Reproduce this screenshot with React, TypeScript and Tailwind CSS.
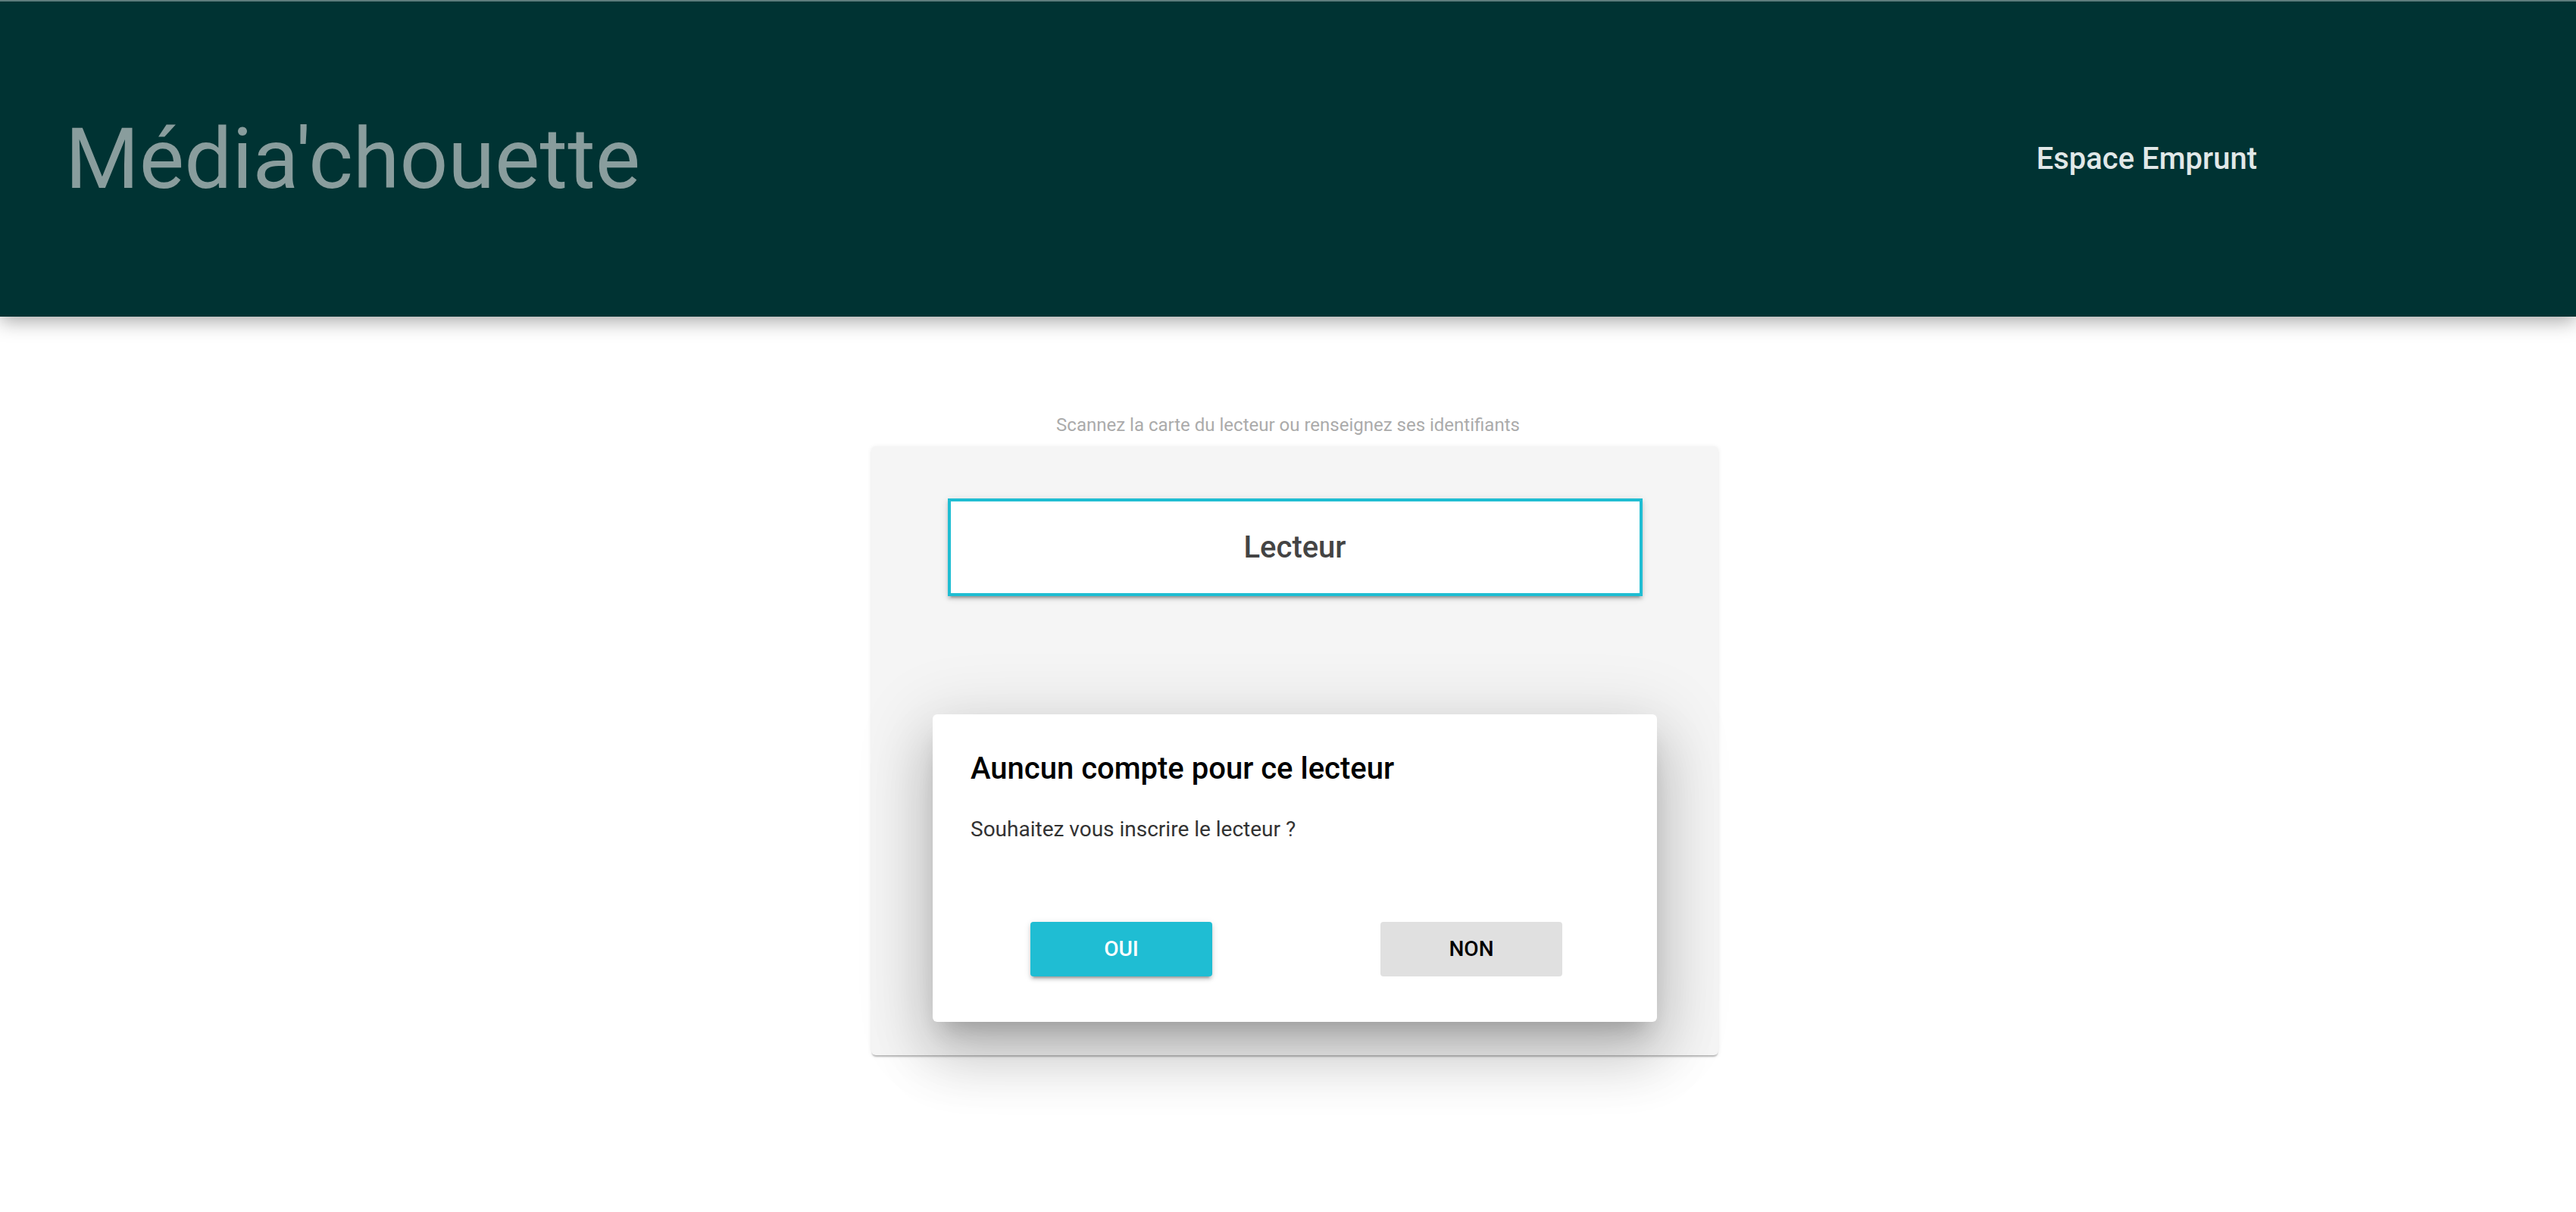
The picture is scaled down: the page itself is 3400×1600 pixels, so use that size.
export default function App() {
	return (
		<div className="min-h-screen bg-white font-['Roboto','Liberation_Sans',sans-serif]">
			<header className="relative z-10 flex h-[418px] items-center justify-between border-t-2 border-[#5d7c7c] bg-[#003333] pl-[86px] pr-[421px] shadow-[0_6px_24px_rgba(0,0,0,0.35)]">
				<h1 className="text-[112px] font-normal leading-none text-[#899d9d]">
					Média'chouette
				</h1>
				<span className="text-[40px] font-medium leading-none text-[#e1e8e8]">
					Espace Emprunt
				</span>
			</header>

			<main className="flex flex-col items-center pt-[127px]">
				<p className="text-[24px] leading-[32px] text-[#ababab]">
					Scannez la carte du lecteur ou renseignez ses identifiants
				</p>

				<div className="ml-[18px] mt-[12px] flex w-[1118px] flex-col items-center rounded-[6px] bg-[#f5f5f5] pb-[44px] pt-[69px] shadow-[0_3px_2px_-1px_rgba(0,0,0,0.25),0_1px_6px_rgba(0,0,0,0.08)]">
					<div className="flex h-[129px] w-[917px] items-center justify-center border-4 border-[#1fbdd2] bg-white text-[40px] font-medium text-[#444444] shadow-[0_6px_2px_-4px_rgba(0,0,0,0.2),0_4px_4px_0_rgba(0,0,0,0.14),0_2px_10px_0_rgba(0,0,0,0.12)]">
						Lecteur
					</div>

					<div className="mt-[156px] w-[956px] rounded-[6px] bg-white px-[50px] pb-[60px] pt-[48px] shadow-[0_22px_30px_-14px_rgba(0,0,0,0.2),0_48px_76px_6px_rgba(0,0,0,0.14),0_18px_92px_16px_rgba(0,0,0,0.12)]">
						<h2 className="text-[40px] font-medium leading-[48px] text-black">
							Auncun compte pour ce lecteur
						</h2>
						<p className="mt-[36px] text-[28px] leading-[40px] text-[#333333]">
							Souhaitez vous inscrire le lecteur ?
						</p>
						<div className="-mx-[50px] mt-[102px] flex justify-between pl-[129px] pr-[125px]">
							<button
								type="button"
								className="h-[72px] w-[240px] rounded-[4px] bg-[#1fbdd3] text-[28px] font-medium text-white shadow-[0_6px_2px_-4px_rgba(0,0,0,0.2),0_4px_4px_0_rgba(0,0,0,0.14),0_2px_10px_0_rgba(0,0,0,0.12)]"
							>
								OUI
							</button>
							<button
								type="button"
								className="h-[72px] w-[240px] rounded-[4px] bg-[#e0e0e0] text-[28px] font-medium text-black"
							>
								NON
							</button>
						</div>
					</div>
				</div>
			</main>
		</div>
	);
}
